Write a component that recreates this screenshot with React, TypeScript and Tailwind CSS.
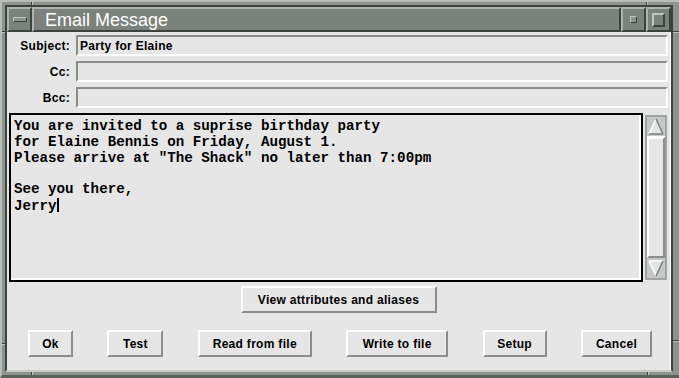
import React from "react";

function VNotch({ className }: { className: string }) {
  return <div className={`absolute w-[2px] border-l border-r border-l-[#3d423f] border-r-[#bcc1bb] ${className}`} />;
}

function HNotch({ className }: { className: string }) {
  return <div className={`absolute h-[2px] border-t border-b border-t-[#3d423f] border-b-[#bcc1bb] ${className}`} />;
}

function Field({ label, value }: { label: string; value?: string }) {
  return (
    <div className="flex items-center h-[21px]">
      <div className="w-[64px] pr-[1px] text-right text-[12px] font-bold tracking-[0.3px] text-black">
        {label}
      </div>
      <div className="ml-[5px] mr-[2px] flex-1 h-full flex items-center pl-[2px] border-2 border-t-[#8b8f8b] border-l-[#8b8f8b] border-b-white border-r-white bg-[#e6e6e6] text-[12px] font-bold tracking-[0.3px] text-black">
        {value}
      </div>
    </div>
  );
}

function Btn({ label, className }: { label: string; className: string }) {
  return (
    <button
      type="button"
      className={`h-[27px] flex items-center justify-center border-2 border-t-white border-l-white border-r-[#8b8f8b] border-b-[#8b8f8b] bg-[#e6e6e6] text-[12px] font-bold tracking-[0.3px] text-black ${className}`}
    >
      {label}
    </button>
  );
}

function ArrowUp() {
  return (
    <svg width="18" height="20" viewBox="0 0 18 20" className="block">
      <rect x="0" y="0" width="18" height="20" fill="#c5c9c5" />
      <polygon points="9,2 2,17 16,17" fill="#e2e4e2" />
      <line x1="9" y1="2" x2="2" y2="17" stroke="#ffffff" strokeWidth="1.5" />
      <line x1="9" y1="2" x2="16" y2="17" stroke="#7b807b" strokeWidth="1.5" />
      <line x1="2" y1="17" x2="16" y2="17" stroke="#7b807b" strokeWidth="1.5" />
      <line x1="0" y1="19.5" x2="18" y2="19.5" stroke="#ffffff" strokeWidth="1" />
    </svg>
  );
}

function ArrowDown() {
  return (
    <svg width="18" height="20" viewBox="0 0 18 20" className="block">
      <rect x="0" y="0" width="18" height="20" fill="#c5c9c5" />
      <polygon points="2,3 16,3 9,18" fill="#e2e4e2" />
      <line x1="2" y1="3" x2="16" y2="3" stroke="#ffffff" strokeWidth="1.5" />
      <line x1="2" y1="3" x2="9" y2="18" stroke="#ffffff" strokeWidth="1.5" />
      <line x1="16" y1="3" x2="9" y2="18" stroke="#7b807b" strokeWidth="1.5" />
    </svg>
  );
}

export default function App() {
  return (
    <div className="relative w-[679px] h-[378px] overflow-hidden bg-[#8d938d] border-l-2 border-t-2 border-b-[3px] border-l-[#b8bdb7] border-t-[#b8bdb7] border-b-[#5a605b] pt-[3px] pl-[3px] pr-[6px] pb-[3px] font-['Liberation_Sans',Arial,sans-serif]">
      {/* resize handle notches in the frame */}
      <VNotch className="left-[29px] top-[-2px] h-[5px]" />
      <VNotch className="left-[644px] top-[-2px] h-[5px]" />
      <VNotch className="left-[29px] top-[370px] h-[6px]" />
      <VNotch className="left-[645px] top-[370px] h-[6px]" />
      <HNotch className="left-[-2px] top-[29px] w-[5px]" />
      <HNotch className="left-[-2px] top-[341px] w-[5px]" />
      <HNotch className="left-[671px] top-[29px] w-[6px]" />
      <HNotch className="left-[671px] top-[338px] w-[6px]" />

      <div className="w-full h-full flex flex-col border-2 border-t-[#3d423f] border-l-[#3d423f] border-r-[#3d423f] border-b-[#c8ccc7]">
        {/* Title bar */}
        <div className="flex h-[25px] shrink-0">
          <div className="w-[25px] flex items-center justify-center bg-[#7b817c] border-2 border-t-[#aeb3ad] border-l-[#aeb3ad] border-b-[#3d423f] border-r-[#3d423f]">
            <div className="w-[14px] h-[5px] bg-[#8d938d] border border-t-[#c0c5bf] border-l-[#c0c5bf] border-b-[#3d423f] border-r-[#3d423f]" />
          </div>
          <div className="flex-1 flex items-center pl-[11px] bg-[#7b817c] border-2 border-t-[#aeb3ad] border-l-[#aeb3ad] border-b-[#3d423f] border-r-[#3d423f] text-[18px] leading-none text-white">
            Email Message
          </div>
          <div className="w-[25px] flex items-center justify-center bg-[#7b817c] border-2 border-t-[#aeb3ad] border-l-[#aeb3ad] border-b-[#3d423f] border-r-[#3d423f]">
            <div className="w-[7px] h-[7px] bg-[#8d938d] border border-t-[#c0c5bf] border-l-[#c0c5bf] border-b-[#3d423f] border-r-[#3d423f]" />
          </div>
          <div className="w-[25px] flex items-center justify-center bg-[#7b817c] border-2 border-t-[#aeb3ad] border-l-[#aeb3ad] border-b-[#3d423f] border-r-[#3d423f]">
            <div className="w-[13px] h-[14px] bg-[#7b817c] border-2 border-t-[#c0c5bf] border-l-[#c0c5bf] border-b-[#3d423f] border-r-[#3d423f]" />
          </div>
        </div>

        {/* Content */}
        <div className="flex-1 flex flex-col bg-[#e6e6e6] border-r border-r-white pt-[3px]">
          <div className="flex flex-col gap-[5px]">
            <Field label="Subject:" value="Party for Elaine" />
            <Field label="Cc:" />
            <Field label="Bcc:" />
          </div>

          <div className="flex mt-[5px] h-[169px] pl-[2px] pr-[3px] gap-[2px]">
            <div className="w-[634px] h-full border-2 border-black">
              <div className="h-full pt-[4px] pl-[3px] border-b-2 border-r-2 border-b-white border-r-white font-['Liberation_Mono','Courier_New',monospace] text-[14.2px] leading-[15.8px] font-bold text-black whitespace-pre">
                <div>You are invited to a suprise birthday party</div>
                <div>for Elaine Bennis on Friday, August 1.</div>
                <div>Please arrive at "The Shack" no later than 7:00pm</div>
                <div>&nbsp;</div>
                <div>See you there,</div>
                <div>
                  Jerry<span className="inline-block w-[2px] h-[14px] bg-black align-[-2px]" />
                </div>
              </div>
            </div>

            {/* Scrollbar */}
            <div className="w-[22px] my-[2px] flex flex-col border-2 border-[#a0a4a0] bg-[#e6e6e6]">
              <ArrowUp />
              <div className="flex-1 border-2 border-t-white border-l-white border-b-[#8b8f8b] border-r-[#8b8f8b] bg-[#e6e6e6]" />
              <ArrowDown />
            </div>
          </div>

          <div className="flex justify-center mt-[4px]">
            <Btn label="View attributes and aliases" className="w-[196px]" />
          </div>

          <div className="flex justify-between mt-[17px] pl-[21px] pr-[18px]">
            <Btn label="Ok" className="w-[45px]" />
            <Btn label="Test" className="w-[56px]" />
            <Btn label="Read from file" className="w-[114px]" />
            <Btn label="Write to file" className="w-[102px]" />
            <Btn label="Setup" className="w-[64px]" />
            <Btn label="Cancel" className="w-[71px]" />
          </div>
        </div>
      </div>
    </div>
  );
}
